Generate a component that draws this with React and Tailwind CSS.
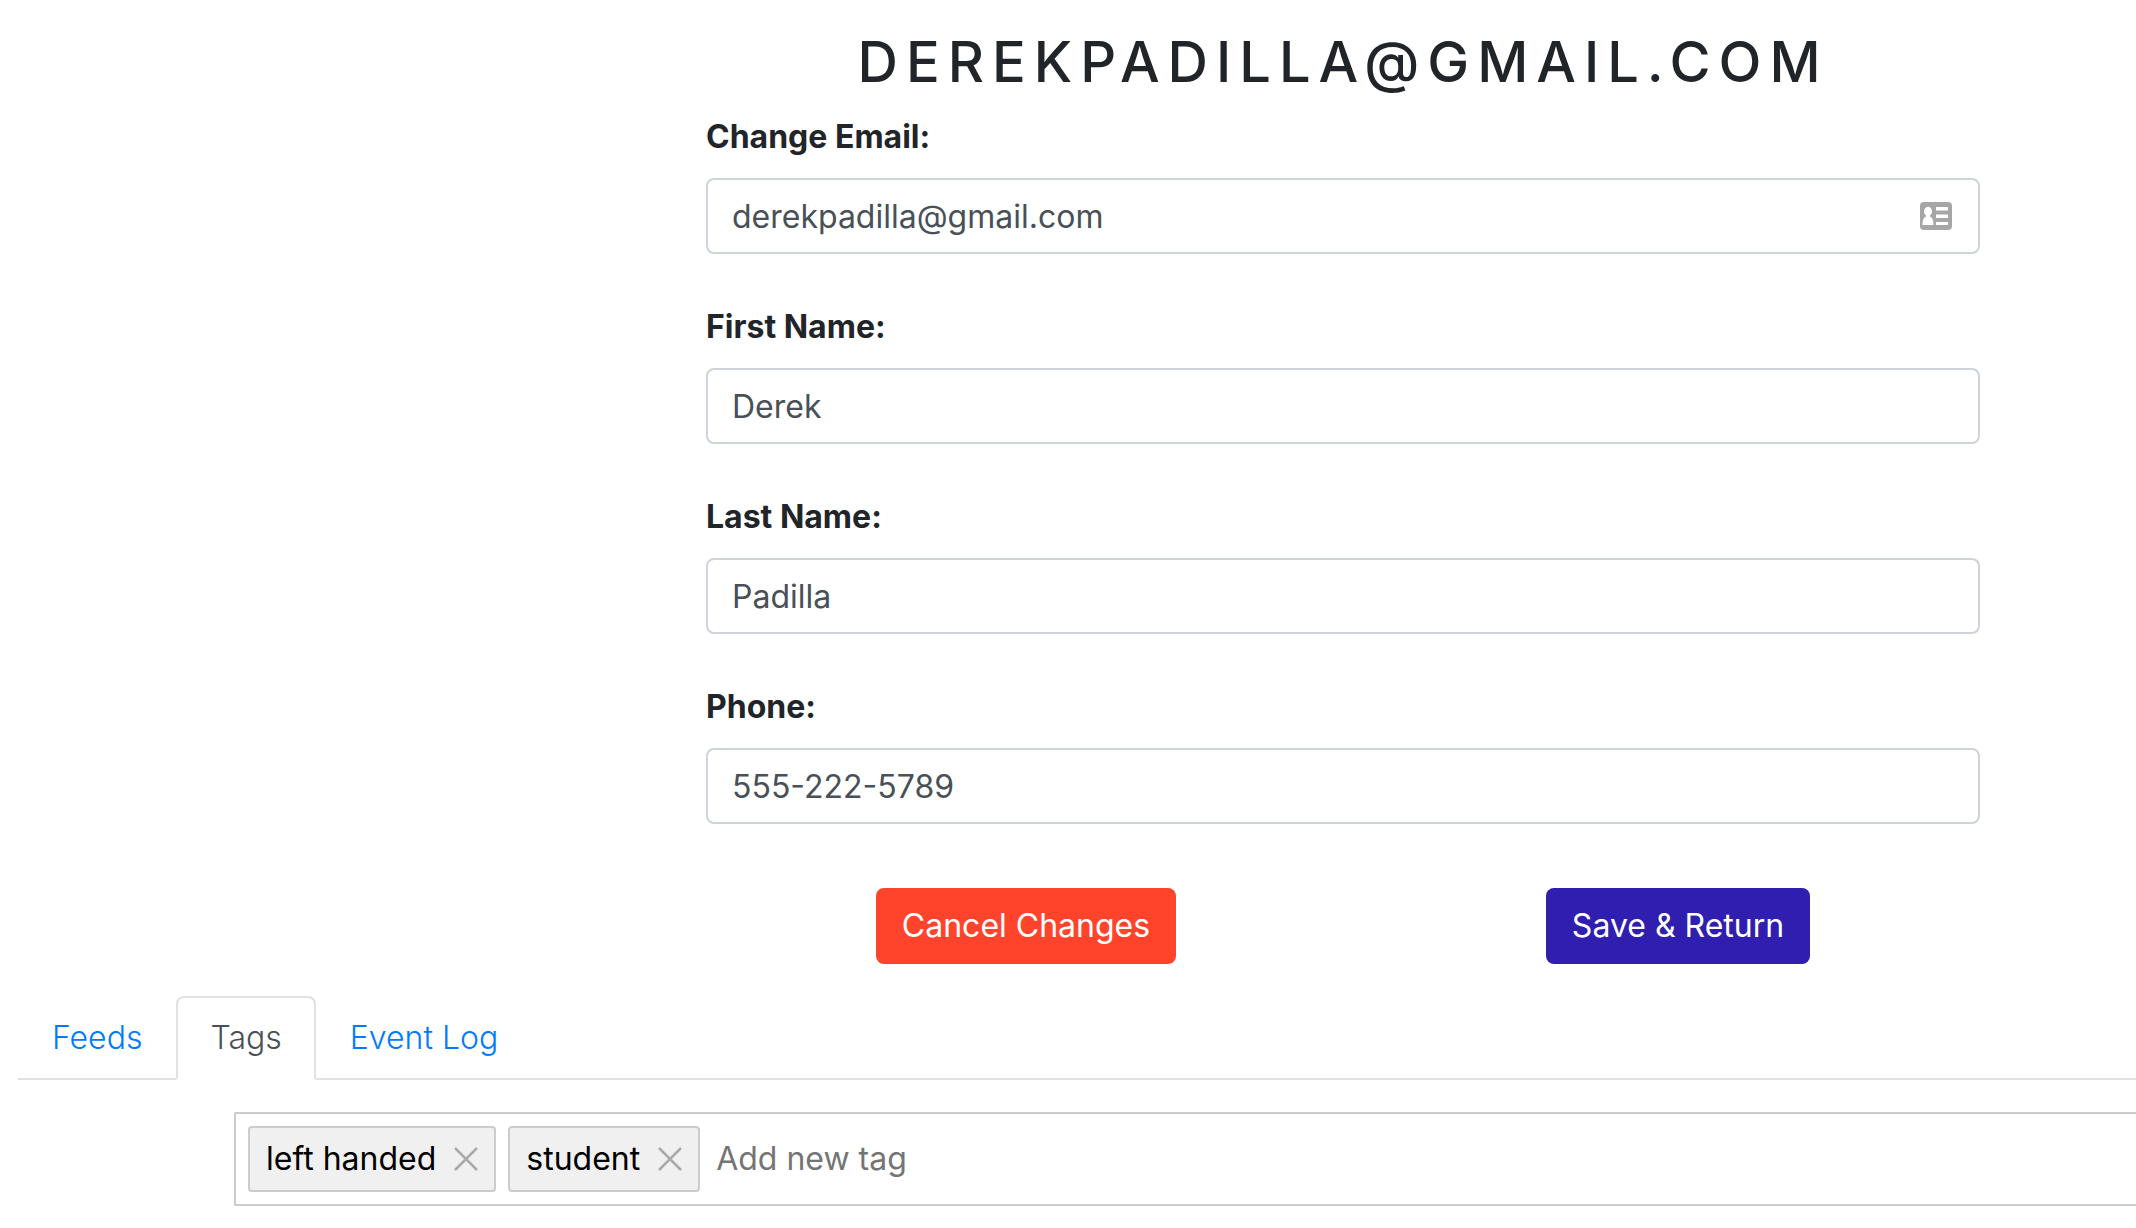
import { useState } from "react";
import clsx from "clsx";

const fields = [
  { id: "email", label: "Change Email:", type: "email", value: "derekpadilla@gmail.com", card: true },
  { id: "firstName", label: "First Name:", type: "text", value: "Derek" },
  { id: "lastName", label: "Last Name:", type: "text", value: "Padilla" },
  { id: "phone", label: "Phone:", type: "tel", value: "555-222-5789" },
];

const tabs = ["Feeds", "Tags", "Event Log"];

const ContactCardIcon = () => (
  <svg
    className="absolute right-7 top-6 w-8 h-7 pointer-events-none"
    viewBox="0 0 32 28"
    aria-hidden="true"
  >
    <rect width="32" height="28" rx="4" fill="#a6a6a6" />
    <ellipse cx="8" cy="9.5" rx="4" ry="4.7" fill="#fff" />
    <path d="M6 12h4v2.500c2.300 1 3.500 3.500 3.500 8.500h-11c0-5 1.200-7.500 3.500-8.500z" fill="#fff" />
    <path d="M16 5h12v3.500H16zM16 12.500h12V16H16zM16 20h12v3H16z" fill="#fff" />
  </svg>
);

const Field = ({ id, label, type, value, card }) => (
  <div className="mb-12">
    <label htmlFor={id} className="block w-fit mb-4 leading-[50px] font-bold text-[#212529]">
      {label}
    </label>
    <div className="relative">
      <input
        id={id}
        type={type}
        defaultValue={value}
        className="block w-full h-[76px] px-6 bg-white border-2 border-[#ced4da] rounded-lg text-[#495057] outline-none"
      />
      {card && <ContactCardIcon />}
    </div>
  </div>
);

const Tag = ({ name, onRemove }) => (
  <li className="flex items-center gap-[18px] h-[66px] px-4 bg-[#f0f0f0] border-2 border-[#ccc] rounded text-black">
    {name}
    <button type="button" onClick={onRemove} aria-label={`Remove ${name}`}>
      <svg className="block size-6" viewBox="0 0 24 24" fill="none" stroke="#aaa" strokeWidth="2.5">
        <path d="M1 1l22 22M23 1l-22 22" />
      </svg>
    </button>
  </li>
);

const App = () => {
  const [activeTab, setActiveTab] = useState("Tags");
  const [tags, setTags] = useState(["left handed", "student"]);

  const addTag = (e) => {
    const name = e.target.value.trim();
    if (e.key === "Enter" && name && !tags.includes(name)) {
      setTags([...tags, name]);
      e.target.value = "";
    }
  };

  return (
    <main className="min-h-screen pt-7 bg-white text-[32px] leading-[48px] font-[Inter,sans-serif]">
      {/* User form */}
      <div className="grid grid-cols-[706fr_1274fr_156fr]">
        <form className="col-start-2" onSubmit={(e) => e.preventDefault()}>
          <h1 className="mb-4 text-center text-[56px] leading-[68px] font-medium uppercase tracking-[8px] text-[#212529]">
            derekpadilla@gmail.com
          </h1>

          {fields.map((field) => (
            <Field key={field.id} {...field} />
          ))}

          <div className="flex justify-around -mx-[15px] pt-4">
            <button type="button" className="h-[76px] px-[26px] rounded-lg bg-[#ff442b] text-white">
              Cancel Changes
            </button>
            <button type="submit" className="h-[76px] px-[26px] rounded-lg bg-[#2f1eb0] text-white">
              Save &amp; Return
            </button>
          </div>
        </form>
      </div>

      {/* Tabs */}
      <div role="tablist" className="flex mt-8 ml-[18px] border-b-2 border-[#dee2e6]">
        {tabs.map((tab) => (
          <button
            key={tab}
            type="button"
            role="tab"
            aria-selected={tab === activeTab}
            onClick={() => setActiveTab(tab)}
            className={clsx(
              "-mb-0.5 h-[84px] px-8 border-2 rounded-t-lg font-light",
              tab === activeTab
                ? "border-[#dee2e6] border-b-white bg-white text-[#495057]"
                : "border-transparent text-[#007bff]"
            )}
          >
            {tab}
          </button>
        ))}
      </div>

      {/* Tag editor */}
      <div className="flex mt-8 ml-[234px] p-3 border-2 border-r-0 border-[#ccc] rounded-l-xs">
        <ul className="flex gap-3">
          {tags.map((tag) => (
            <Tag key={tag} name={tag} onRemove={() => setTags(tags.filter((t) => t !== tag))} />
          ))}
        </ul>
        <input
          type="text"
          aria-label="Add new tag"
          placeholder="Add new tag"
          onKeyDown={addTag}
          className="flex-1 pl-4 outline-none placeholder:text-[#757575]"
        />
      </div>
    </main>
  );
};

export default App;
